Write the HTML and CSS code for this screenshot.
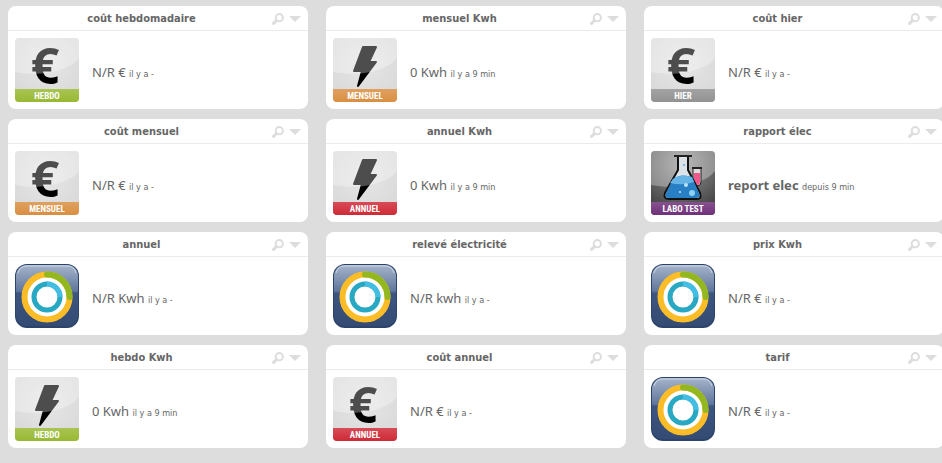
FILE: index.html
```
<!DOCTYPE html>
<html lang="fr">
<head>
<meta charset="utf-8">
<title>Consommation</title>
<link rel="stylesheet" href="styles.css">
</head>
<body>
<svg class="defs" aria-hidden="true">
  <defs>
    <radialGradient id="grey" cx=".5" cy=".4" r=".8"><stop offset="0" stop-color="#e6e6e6"/><stop offset="1" stop-color="#d6d6d6"/></radialGradient>
    <radialGradient id="lab" cx=".5" cy=".2" r=".8"><stop offset="0" stop-color="#999"/><stop offset="1" stop-color="#424242"/></radialGradient>
    <linearGradient id="navy" x1="0" y1="0" x2="0" y2="1"><stop offset="0" stop-color="#a6b4ca"/><stop offset=".43" stop-color="#5f769c"/><stop offset=".46" stop-color="#3d5680"/><stop offset="1" stop-color="#344b73"/></linearGradient>
    <linearGradient id="shade" x1="0" y1="0" x2="0" y2="1"><stop offset="0" stop-color="#fff" stop-opacity=".16"/><stop offset="1" stop-color="#fff" stop-opacity="0"/></linearGradient>
    <clipPath id="tile"><rect width="64" height="64" rx="4"/></clipPath>
  </defs>
  <symbol id="gloss" viewBox="0 0 64 64"><path d="M4 0H60Q64 0 64 4V20C54 33 26 39 0 34V4Q0 0 4 0Z" fill="#fff" opacity=".3"/></symbol>
  <symbol id="euro" viewBox="0 0 64 64">
    <rect width="64" height="64" rx="4" fill="url(#grey)"/>
  </symbol>
  <symbol id="bolt" viewBox="0 0 64 64">
    <rect width="64" height="64" rx="4" fill="url(#grey)"/><path d="M30 9H43L36 24H43L25 48L29 33H21Z" stroke="#000" stroke-width="2" stroke-linejoin="round"/><use href="#gloss"/>
  </symbol>
  <symbol id="flask" viewBox="0 0 64 64">
    <rect width="64" height="64" rx="4" fill="url(#lab)"/><use href="#gloss"/>
    <path d="M42 17V31a4 4 0 0 0 8 0V17" fill="#ddd" stroke="#222" stroke-width="1"/><path d="M43 22H49V31a3 3 0 0 1-6 0Z" fill="#f0588c"/><path d="M41 17H51" stroke="#222" stroke-width="2"/>
    <path d="M27 5V19L14 42Q12 48 18 48H46Q51 48 49 42L37 19V5Z" fill="#dce3e8" stroke="#111" stroke-width="2"/>
    <path d="M22 28Q30 22 41 26L48 42Q50 47 45 47H18Q13 47 15 42Z" fill="#287fc4"/><path d="M22 28Q30 22 41 26L43 31Q31 35 19 32Z" fill="#66b4e6"/>
    <path d="M23 5H41" stroke="#222" stroke-width="2"/><circle cx="35" cy="34" r="2" fill="#b9e4fb"/><circle cx="41" cy="42" r="3" fill="#8fd0f5"/><circle cx="29" cy="41" r="1" fill="#c8ebfd"/><circle cx="33" cy="14" r="1" fill="#5aa8dd"/>
  </symbol>
  <symbol id="rings" viewBox="0 0 64 64">
    <rect width="64" height="64" rx="12" fill="#2c436b"/><rect x="1" y="1" width="62" height="61" rx="11" fill="url(#navy)"/><path d="M3 9Q5 2 12 2H52Q59 2 61 9" fill="none" stroke="#ccd6e4"/>
    <circle cx="32" cy="33" r="25" fill="#fff"/><circle cx="32" cy="33" r="22.500" fill="none" stroke="#fbbd27" stroke-width="6"/><path d="M32 10.500A22.500 22.500 0 0 1 54.500 33" fill="none" stroke="#93b81f" stroke-width="6" stroke-linecap="round"/>
    <circle cx="32" cy="33" r="13" fill="none" stroke="#28a8c2" stroke-width="5"/><path d="M32 20A13 13 0 0 1 45 33" fill="none" stroke="#43bee2" stroke-width="5"/>
  </symbol>
  <symbol id="search" viewBox="0 0 12 12"><circle cx="7.300" cy="4.700" r="3.600" fill="none" stroke="#ddd" stroke-width="2"/><path d="M4.500 7.500L1.600 10.400" stroke="#ddd" stroke-width="3" stroke-linecap="round"/></symbol>
  <symbol id="caret" viewBox="0 0 12 12"><path d="M0 3H12L6 9Z" fill="#ddd"/></symbol>
</svg>
<main class="board" id="board"></main>
<script src="board.js"></script>
</body>
</html>
```
FILE: styles.css
```
* { box-sizing: border-box; }
body {
  margin: 0;
  background: #ddd;
  color: #666;
  font-family: "DejaVu Sans Condensed", "Noto Sans", sans-serif;
  font-size: 13px;
  overflow-x: hidden;
}
.defs { position: absolute; width: 0; height: 0; }
.board {
  display: grid;
  grid-template-columns: repeat(3, minmax(0, 1fr));
  gap: 10px 18px;
  margin: 6px -2px 15px 8px;
}
.card { background: #fff; border-radius: 8px; }
.head {
  display: flex;
  align-items: center;
  padding: 2px 7px 0 3px;
  border-bottom: 1px solid #ebebeb;
}
.title {
  flex: 1;
  margin: 0;
  text-align: center;
  font-size: 11px;
  line-height: 22px;
  font-weight: 700;
}
.action {
  display: block;
  width: 12px;
  height: 12px;
  margin-left: 5px;
  padding: 0;
  border: 0;
  background: none;
}
.title + .action { margin-left: 0; }
.action svg { display: block; width: 12px; height: 12px; }
.body { display: flex; align-items: center; gap: 13px; padding: 7px; }
.tile { display: block; width: 64px; height: 64px; flex: none; overflow: visible; }
.value {
  margin: 0;
  padding-top: 5px;
  font-family: "Noto Sans", "Open Sans", sans-serif;
  line-height: 20px;
}
.value small { font-family: "DejaVu Sans Condensed", "Noto Sans", sans-serif; font-size: 9px; }
.euro { font: 700 50px "Open Sans", sans-serif; text-anchor: middle; }
.band {
  font: 700 9px "Roboto Condensed", Roboto, sans-serif;
  text-anchor: middle;
  fill: #fff;
}
```
FILE: board.js
```
const colors = { HEBDO: "#98b933", MENSUEL: "#d98f42", ANNUEL: "#cf2a36", HIER: "#929292", "LABO TEST": "#70317a" };
const cards = [
  ["coût hebdomadaire", "euro", "HEBDO", "N/R €", "il y a -"],
  ["mensuel Kwh", "bolt", "MENSUEL", "0 Kwh", "il y a 9 min"],
  ["coût hier", "euro", "HIER", "N/R €", "il y a -"],
  ["coût mensuel", "euro", "MENSUEL", "N/R €", "il y a -"],
  ["annuel Kwh", "bolt", "ANNUEL", "0 Kwh", "il y a 9 min"],
  ["rapport élec", "flask", "LABO TEST", "<strong>report elec</strong>", "depuis 9 min"],
  ["annuel", "rings", "", "N/R Kwh", "il y a -"],
  ["relevé électricité", "rings", "", "N/R kwh", "il y a -"],
  ["prix Kwh", "rings", "", "N/R €", "il y a -"],
  ["hebdo Kwh", "bolt", "HEBDO", "0 Kwh", "il y a 9 min"],
  ["coût annuel", "euro", "ANNUEL", "N/R €", "il y a -"],
  ["tarif", "rings", "", "N/R €", "il y a -"]
];
const sign = icon => icon === "euro" ? `<text class="euro" x="30" y="46">€</text><use href="#gloss"/>` : "";
const band = label => label ? `<g clip-path="url(#tile)"><rect y="51" width="64" height="13" fill="${colors[label]}"/><rect y="51" width="64" height="13" fill="url(#shade)"/></g><text class="band" x="32" y="61">${label}</text>` : "";
document.getElementById("board").innerHTML = cards.map(([title, icon, label, value, age]) => `
<section class="card">
  <header class="head">
    <h2 class="title">${title}</h2>
    <button class="action" aria-label="Rechercher"><svg><use href="#search"/></svg></button>
    <button class="action" aria-label="Menu"><svg><use href="#caret"/></svg></button>
  </header>
  <div class="body">
    <svg class="tile" viewBox="0 0 64 64"><use href="#${icon}"/>${sign(icon)}${band(label)}</svg>
    <p class="value">${value} <small>${age}</small></p>
  </div>
</section>`).join("");
```
